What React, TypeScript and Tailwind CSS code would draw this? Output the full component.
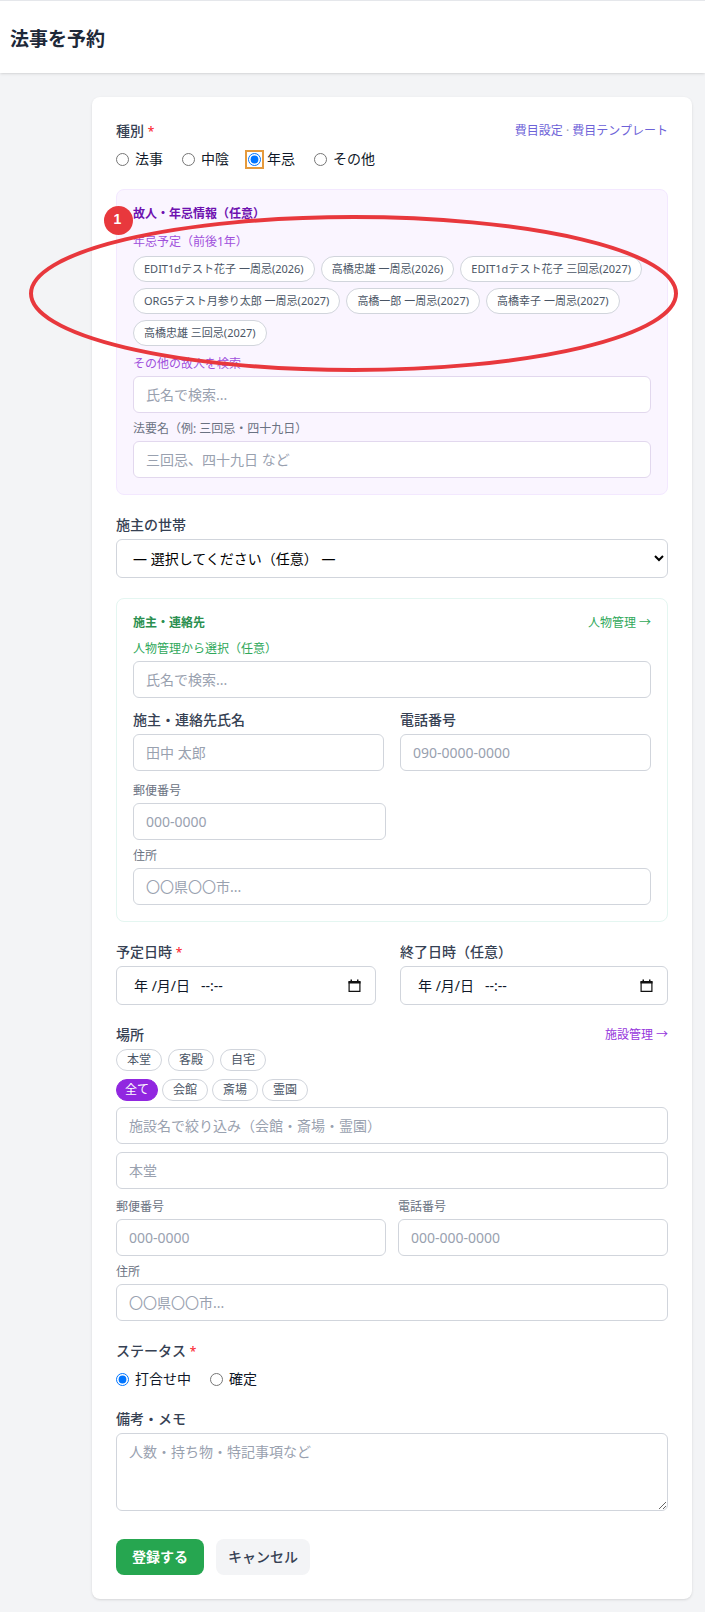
import { useState } from "react";
import type { ReactNode } from "react";

const INPUT =
  "block w-full rounded-md border bg-white px-3 py-2 text-sm leading-[19px] placeholder:text-gray-400";

const MEMORIALS = [
  "EDIT1dテスト花子 一周忌(2026)",
  "高橋忠雄 一周忌(2026)",
  "EDIT1dテスト花子 三回忌(2027)",
  "ORG5テスト月参り太郎 一周忌(2027)",
  "高橋一郎 一周忌(2027)",
  "高橋幸子 一周忌(2027)",
  "高橋忠雄 三回忌(2027)",
];

function Required() {
  return <span className="text-xs text-red-500">*</span>;
}

function FieldLabel({
  htmlFor,
  children,
}: {
  htmlFor: string;
  children: ReactNode;
}) {
  return (
    <label
      htmlFor={htmlFor}
      className="mb-1 block text-sm leading-5 font-medium text-gray-700"
    >
      {children}
    </label>
  );
}

function SmallField({
  id,
  label,
  placeholder,
  labelColor = "text-gray-500",
  border = "border-gray-300",
}: {
  id: string;
  label: string;
  placeholder: string;
  labelColor?: string;
  border?: string;
}) {
  return (
    <div>
      <label htmlFor={id} className={`mb-1 block text-xs ${labelColor}`}>
        {label}
      </label>
      <input
        id={id}
        type="text"
        placeholder={placeholder}
        className={`${INPUT} ${border}`}
      />
    </div>
  );
}

function RadioGroup({
  name,
  options,
  value,
  onChange,
  ring,
}: {
  name: string;
  options: string[];
  value: string;
  onChange: (v: string) => void;
  ring?: boolean;
}) {
  return (
    <div className="flex flex-wrap gap-x-[19px]">
      {options.map((x) => (
        <label
          key={x}
          className="flex items-center gap-1.5 text-sm leading-5 text-gray-900"
        >
          <input
            type="radio"
            name={name}
            checked={value === x}
            onChange={() => onChange(x)}
            className={
              ring && value === x
                ? "size-[13px] rounded-sm outline-2 outline-offset-1 outline-[#e59a3c]"
                : "size-[13px]"
            }
          />
          {x}
        </label>
      ))}
    </div>
  );
}

function DateField({ id }: { id: string }) {
  return (
    <div className="flex items-center rounded-md border border-gray-300 bg-white pr-3.5 pl-[17px]">
      <input
        id={id}
        type="text"
        defaultValue={"年 /月/日\u00a0\u00a0 --:--"}
        className="w-full min-w-0 py-2 text-sm leading-[21px] text-gray-900"
      />
      <button type="button" aria-label="カレンダー">
        <svg width="13" height="14" viewBox="0 0 13 14" fill="none">
          <path d="M1.1 3h10.8v9.4H1.1z" stroke="#111" strokeWidth="1.2" />
          <path d="M.5 2h12v2.6H.5zM2.5.6H4V3H2.5zM9 .6h1.5V3H9z" fill="#111" />
        </svg>
      </button>
    </div>
  );
}

function Pill({
  active,
  onClick,
  children,
}: {
  active?: boolean;
  onClick?: () => void;
  children: ReactNode;
}) {
  return (
    <button
      type="button"
      onClick={onClick}
      className={
        active
          ? "rounded-full border border-[#9127e0] bg-[#9127e0] px-2 py-0.5 text-xs text-white"
          : "rounded-full border border-gray-300 bg-white px-2.5 py-0.5 text-xs text-gray-600"
      }
    >
      {children}
    </button>
  );
}

export default function App() {
  const [kind, setKind] = useState("年忌");
  const [status, setStatus] = useState("打合せ中");
  const [filter, setFilter] = useState("全て");

  return (
    <div className="relative min-h-screen bg-gray-100 pb-[13px] font-['Noto_Sans','Noto_Sans_CJK_JP',sans-serif]">
      <header className="border-t border-gray-200 bg-white px-2.5 pt-6 pb-5 shadow-sm">
        <h1 className="text-[19px] leading-7 font-semibold text-gray-800">
          法事を予約
        </h1>
      </header>

      <main className="pt-6 pr-[13px] pl-[92px]">
        <form
          onSubmit={(e) => e.preventDefault()}
          className="flex flex-col gap-5 rounded-lg bg-white p-6 shadow-sm"
        >
          <section>
            <div className="mb-2 flex items-center justify-between">
              <span className="text-sm leading-5 font-medium text-gray-700">
                種別 <Required />
              </span>
              <span className="text-xs text-gray-400">
                <a href="#items" className="text-[#6d62d8]">
                  費目設定
                </a>{" "}
                ·{" "}
                <a href="#templates" className="text-[#6d62d8]">
                  費目テンプレート
                </a>
              </span>
            </div>
            <RadioGroup
              name="kind"
              options={["法事", "中陰", "年忌", "その他"]}
              value={kind}
              onChange={setKind}
              ring
            />
          </section>

          <section className="rounded-lg border border-purple-100 bg-purple-50 p-4">
            <h2 className="text-xs font-semibold text-purple-800">
              故人・年忌情報（任意）
            </h2>
            <p className="mt-3 text-xs text-[#a050dc]">年忌予定（前後1年）</p>
            <div className="mt-1.5 mb-2.5 flex flex-wrap gap-1.5">
              {MEMORIALS.map((x) => (
                <button
                  key={x}
                  type="button"
                  className="rounded-full border border-gray-300 bg-white px-2.5 py-1 text-[11px] leading-4 text-gray-600"
                >
                  {x}
                </button>
              ))}
            </div>
            <div className="flex flex-col gap-2">
              <SmallField
                id="deceased"
                label="その他の故人を検索"
                placeholder="氏名で検索..."
                labelColor="text-[#a050dc]"
                border="border-[#e2d8ee]"
              />
              <SmallField
                id="memorial"
                label="法要名（例: 三回忌・四十九日）"
                placeholder="三回忌、四十九日 など"
                border="border-[#e2d8ee]"
              />
            </div>
          </section>

          <div>
            <FieldLabel htmlFor="household">施主の世帯</FieldLabel>
            <select
              id="household"
              className="block w-full rounded-md border border-gray-300 bg-white px-3 py-2 text-sm leading-5 text-black"
            >
              <option>— 選択してください（任意） —</option>
            </select>
          </div>

          <section className="rounded-lg border border-[#e4f6f1] bg-white p-4">
            <div className="flex items-center justify-between text-xs">
              <h2 className="font-semibold text-[#2b8f50]">施主・連絡先</h2>
              <a href="#people" className="text-[#2fa85a]">
                人物管理 →
              </a>
            </div>
            <div className="mt-2.5">
              <SmallField
                id="person"
                label="人物管理から選択（任意）"
                placeholder="氏名で検索..."
                labelColor="text-[#2fa85a]"
              />
            </div>
            <div className="mt-3 grid grid-cols-2 gap-4">
              <div>
                <FieldLabel htmlFor="contact">施主・連絡先氏名</FieldLabel>
                <input
                  id="contact"
                  type="text"
                  placeholder="田中 太郎"
                  className={`${INPUT} border-gray-300`}
                />
              </div>
              <div>
                <FieldLabel htmlFor="phone">電話番号</FieldLabel>
                <input
                  id="phone"
                  type="tel"
                  placeholder="090-0000-0000"
                  className={`${INPUT} border-gray-300`}
                />
              </div>
            </div>
            <div className="mt-3 mb-2 grid grid-cols-2 gap-3">
              <SmallField id="zip" label="郵便番号" placeholder="000-0000" />
            </div>
            <SmallField id="address" label="住所" placeholder="〇〇県〇〇市..." />
          </section>

          <div className="grid grid-cols-2 gap-4">
            <div className="pr-2">
              <FieldLabel htmlFor="start">
                予定日時 <Required />
              </FieldLabel>
              <DateField id="start" />
            </div>
            <div>
              <FieldLabel htmlFor="end">終了日時（任意）</FieldLabel>
              <DateField id="end" />
            </div>
          </div>

          <section>
            <div className="mb-1 flex items-center justify-between">
              <label
                htmlFor="place"
                className="text-sm leading-5 font-medium text-gray-700"
              >
                場所
              </label>
              <a href="#facilities" className="text-xs text-[#9636dc]">
                施設管理 →
              </a>
            </div>
            <div className="mb-2 flex flex-wrap gap-1.5">
              {["本堂", "客殿", "自宅"].map((x) => (
                <Pill key={x}>{x}</Pill>
              ))}
            </div>
            <div className="mb-1.5 flex flex-wrap gap-1">
              {["全て", "会館", "斎場", "霊園"].map((x) => (
                <Pill
                  key={x}
                  active={filter === x}
                  onClick={() => setFilter(x)}
                >
                  {x}
                </Pill>
              ))}
            </div>
            <div className="flex flex-col gap-2">
              <input
                type="text"
                aria-label="施設名"
                placeholder="施設名で絞り込み（会館・斎場・霊園）"
                className={`${INPUT} border-gray-300`}
              />
              <input
                id="place"
                type="text"
                placeholder="本堂"
                className={`${INPUT} border-gray-300`}
              />
            </div>
            <div className="mt-2.5 mb-2 grid grid-cols-2 gap-3">
              <SmallField
                id="place-zip"
                label="郵便番号"
                placeholder="000-0000"
              />
              <SmallField
                id="place-phone"
                label="電話番号"
                placeholder="000-000-0000"
              />
            </div>
            <SmallField
              id="place-address"
              label="住所"
              placeholder="〇〇県〇〇市..."
            />
          </section>

          <section>
            <p className="mb-2 text-sm leading-5 font-medium text-gray-700">
              ステータス <Required />
            </p>
            <RadioGroup
              name="status"
              options={["打合せ中", "確定"]}
              value={status}
              onChange={setStatus}
            />
          </section>

          <div>
            <FieldLabel htmlFor="memo">備考・メモ</FieldLabel>
            <textarea
              id="memo"
              rows={3}
              placeholder="人数・持ち物・特記事項など"
              className="block w-full rounded-md border border-gray-300 bg-white px-3 py-2 text-sm leading-5 placeholder:text-gray-400"
            />
          </div>

          <div className="flex gap-3 pt-2">
            <button
              type="submit"
              className="rounded-lg bg-[#26a650] px-4 py-2 text-sm leading-5 font-semibold text-white"
            >
              登録する
            </button>
            <button
              type="button"
              className="rounded-lg bg-gray-100 px-3 py-2 text-sm leading-5 font-medium text-gray-700"
            >
              キャンセル
            </button>
          </div>
        </form>
      </main>

      <svg
        className="pointer-events-none absolute top-[213px] left-7"
        width="652"
        height="162"
        viewBox="0 0 652 162"
        fill="none"
      >
        <ellipse
          cx="325.5"
          cy="80.5"
          rx="322.5"
          ry="76.5"
          stroke="#e8383d"
          strokeWidth="4"
        />
      </svg>
      <div className="absolute top-[206px] left-[104px] size-[29px] rounded-full bg-[#e8383d] pr-0.5 text-center font-['Liberation_Sans',sans-serif] text-sm leading-[26px] font-bold text-white">
        1
      </div>
    </div>
  );
}
